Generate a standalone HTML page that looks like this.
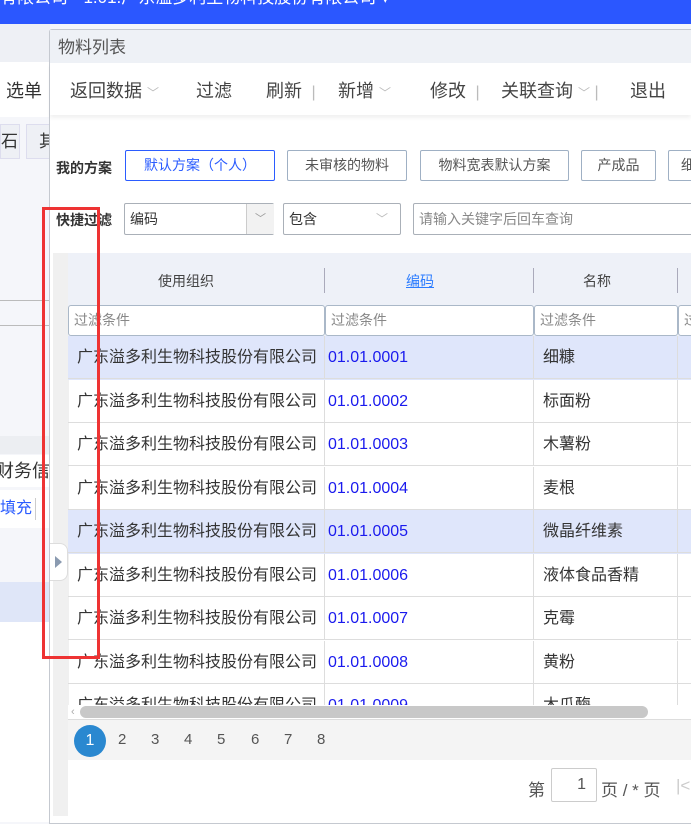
<!DOCTYPE html>
<html><head><meta charset="utf-8"><style>
*{box-sizing:border-box;margin:0;padding:0}
body{width:691px;height:820px;overflow:hidden;position:relative;background:#f5f6fa;font-family:"Liberation Sans","Noto Sans CJK SC",sans-serif;color:#333}
.a{position:absolute}
.top{left:0;top:0;width:691px;height:24px;background:#2b57ff;overflow:hidden}
.cell{position:absolute;height:43px;border-bottom:1px solid #ddd;border-right:1px solid #ddd;font-size:16px;line-height:43px;padding-left:9px;white-space:nowrap;overflow:hidden}
.btn{position:absolute;top:150px;height:31px;border:1px solid #9fb0c4;border-radius:2px;font-size:14px;line-height:29px;text-align:center;color:#555;background:#fff}
.tb{position:absolute;top:77px;font-size:18px;color:#444}
.chev{color:#bbb;font-size:12px}
.fi{position:absolute;top:305px;height:31px;border:1px solid #aab8c8;border-radius:3px;background:#fff;font-size:14px;color:#888;line-height:29px;padding-left:5px}
.pg{position:absolute;top:731px;font-size:15px;color:#555}
</style></head><body>
<div class="a top"><div class="a" style="left:0;top:-17px;color:#fff;font-size:17px;white-space:nowrap">有限公司 ▪ 1.01.广东溢多利生物科技股份有限公司 ▾</div></div>
<div class="a" style="left:0;top:24px;width:50px;height:38px;background:#eef0f5"></div>
<div class="a" style="left:0;top:62px;width:50px;height:55px;background:#fff"></div>
<div class="a" style="left:6px;top:77px;font-size:18px">选单</div>
<div class="a" style="left:0;top:124px;width:20px;height:35px;background:#eef0f5;border:1px solid #dde;font-size:17px;line-height:33px">石</div>
<div class="a" style="left:26px;top:124px;width:24px;height:35px;background:#eef0f5;border:1px solid #dde;font-size:17px;line-height:33px;padding-left:12px">其</div>
<div class="a" style="left:0;top:300px;width:50px;border-top:1px solid #bbb"></div>
<div class="a" style="left:0;top:325px;width:50px;border-top:1px solid #bbb"></div>
<div class="a" style="left:0;top:436px;width:50px;height:18px;background:#eceef2"></div>
<div class="a" style="left:0;top:455px;width:50px;height:32px;background:#fff;overflow:hidden"><div class="a" style="left:-4px;top:0;font-size:18px;line-height:32px;white-space:nowrap">财务信息</div></div>
<div class="a" style="left:0;top:490px;width:50px;height:38px;background:#fff;font-size:16px;line-height:38px;color:#2b5cff">填充</div>
<div class="a" style="left:35px;top:498px;height:22px;border-left:1px solid #ccc"></div>
<div class="a" style="left:0;top:582px;width:50px;height:40px;background:#dfe6f8"></div>
<div class="a" style="left:0;top:622px;width:50px;height:200px;background:#fff"></div>

<div class="a" style="left:49px;top:29px;width:650px;height:795px;background:#fff;border:1px solid #c5c9d0;border-radius:3px 0 0 0"></div>
<div class="a" style="left:50px;top:30px;width:641px;height:33px;background:#eef1f6;font-size:17px;line-height:36px;padding-left:8px;color:#555">物料列表</div>
<div class="a" style="left:50px;top:63px;width:641px;height:52px;background:#fff;box-shadow:0 3px 4px rgba(0,0,0,.06)"></div>
<div class="tb" style="left:70px">返回数据 <span class="chev">﹀</span></div>
<div class="tb" style="left:196px">过滤</div>
<div class="tb" style="left:266px">刷新 <span style="color:#bbb;font-size:16px">&nbsp;|</span></div>
<div class="tb" style="left:338px">新增 <span class="chev">﹀</span></div>
<div class="tb" style="left:430px">修改 <span style="color:#bbb;font-size:16px">&nbsp;|</span></div>
<div class="tb" style="left:501px">关联查询 <span class="chev">﹀</span><span style="color:#bbb;font-size:16px"> |</span></div>
<div class="tb" style="left:630px">退出</div>

<div class="a" style="left:56px;top:158px;font-size:14px;font-weight:bold;color:#333">我的方案</div>
<div class="btn" style="left:125px;width:150px;border-color:#2b5cff;color:#2b5cff">默认方案（个人）</div>
<div class="btn" style="left:287px;width:120px">未审核的物料</div>
<div class="btn" style="left:420px;width:149px">物料宽表默认方案</div>
<div class="btn" style="left:581px;width:75px">产成品</div>
<div class="btn" style="left:668px;width:40px">细</div>

<div class="a" style="left:56px;top:210px;font-size:14px;font-weight:bold">快捷过滤</div>
<div class="a" style="left:124px;top:203px;width:150px;height:32px;border:1px solid #aab0b8;border-radius:2px;font-size:14px;line-height:30px;padding-left:5px">编码<div class="a" style="left:121px;top:0;width:28px;height:30px;border-left:1px solid #ccc;background:#f2f2f2;text-align:center;color:#999;font-size:11px">﹀</div></div>
<div class="a" style="left:283px;top:203px;width:118px;height:32px;border:1px solid #aab0b8;border-radius:2px;font-size:14px;line-height:30px;padding-left:5px">包含<span class="a chev" style="left:92px;top:0">﹀</span></div>
<div class="a" style="left:413px;top:203px;width:290px;height:32px;border:1px solid #aab0b8;border-radius:2px;font-size:14px;line-height:30px;padding-left:5px;color:#888">请输入关键字后回车查询</div>

<div class="a" style="left:53px;top:253px;width:16px;height:563px;background:#f0f0f0"></div>
<div class="a" style="left:68px;top:253px;width:623px;height:84px;background:#eef1f8"></div>
<div class="a" style="left:158px;top:271px;font-size:14px;color:#444">使用组织</div>
<div class="a" style="left:324px;top:268px;height:25px;border-left:1px solid #aab"></div>
<div class="a" style="left:406px;top:271px;font-size:14px;color:#2b7cff;text-decoration:underline">编码</div>
<div class="a" style="left:533px;top:268px;height:25px;border-left:1px solid #aab"></div>
<div class="a" style="left:583px;top:271px;font-size:14px;color:#444">名称</div>
<div class="a" style="left:677px;top:268px;height:25px;border-left:1px solid #aab"></div>
<div class="fi" style="left:68px;width:257px">过滤条件</div>
<div class="fi" style="left:325px;width:209px">过滤条件</div>
<div class="fi" style="left:534px;width:144px">过滤条件</div>
<div class="fi" style="left:678px;width:20px">过</div>

<div class="a" style="left:68px;top:336px;width:623px;height:370px;overflow:hidden" id="g">
<div style="position:absolute;left:0;top:0;width:623px;height:44px;background:#dfe6fb"></div>
<div style="position:absolute;left:0;top:174px;width:623px;height:44px;background:#dfe6fb"></div>
</div>
<script>
var n=["细糠","标面粉","木薯粉","麦根","微晶纤维素","液体食品香精","克霉","黄粉","木瓜酶"],g=document.getElementById('g'),h='';
for(var i=0;i<9;i++){var t=i*43.5;
h+='<div class="cell" style="left:0;top:'+t+'px;width:257px;padding-left:9px">广东溢多利生物科技股份有限公司</div>'+
'<div class="cell" style="left:257px;top:'+t+'px;width:209px;color:#1a1aee;padding-left:3px">01.01.000'+(i+1)+'</div>'+
'<div class="cell" style="left:466px;top:'+t+'px;width:144px">'+n[i]+'</div>'+
'<div class="cell" style="left:610px;top:'+t+'px;width:20px"></div>';}
g.insertAdjacentHTML('beforeend',h);
</script>
<div class="a" style="left:68px;top:705px;width:623px;height:14px;background:#fff"></div>
<div class="a" style="left:71px;top:706px;font-size:11px;color:#aaa">‹</div>
<div class="a" style="left:80px;top:706px;width:568px;height:12px;background:#c8c8c8;border-radius:6px"></div>
<div class="a" style="left:68px;top:719px;width:623px;height:41px;background:#f4f4f4;border-top:1px solid #ddd"></div>
<div class="a" style="left:74px;top:725px;width:32px;height:32px;border-radius:50%;background:#2a88d0;color:#fff;font-size:16px;line-height:32px;text-align:center">1</div>
<div class="pg" style="left:118px">2</div><div class="pg" style="left:151px">3</div><div class="pg" style="left:184px">4</div><div class="pg" style="left:217px">5</div><div class="pg" style="left:251px">6</div><div class="pg" style="left:284px">7</div><div class="pg" style="left:317px">8</div>
<div class="a" style="left:68px;top:760px;width:623px;height:56px;background:#fff"></div>
<div class="a" style="left:528px;top:776px;font-size:17px;color:#555">第</div>
<div class="a" style="left:551px;top:768px;width:46px;height:34px;border:1px solid #ccc;border-radius:2px;font-size:16px;text-align:right;padding-right:10px;line-height:32px;color:#555">1</div>
<div class="a" style="left:601px;top:776px;font-size:17px;color:#555">页 / * 页</div>
<div class="a" style="left:676px;top:776px;font-size:17px;color:#ccc">|&lt;</div>

<div class="a" style="left:50px;top:543px;width:18px;height:38px;background:#fff;border:1px solid #ddd;border-left:0;border-radius:0 8px 8px 0"></div>
<div class="a" style="left:55px;top:556px;width:0;height:0;border-left:7px solid #8a9ab0;border-top:6px solid transparent;border-bottom:6px solid transparent"></div>
<div class="a" style="left:42px;top:207px;width:58px;height:452px;border:3px solid #ee3333"></div>
</body></html>
